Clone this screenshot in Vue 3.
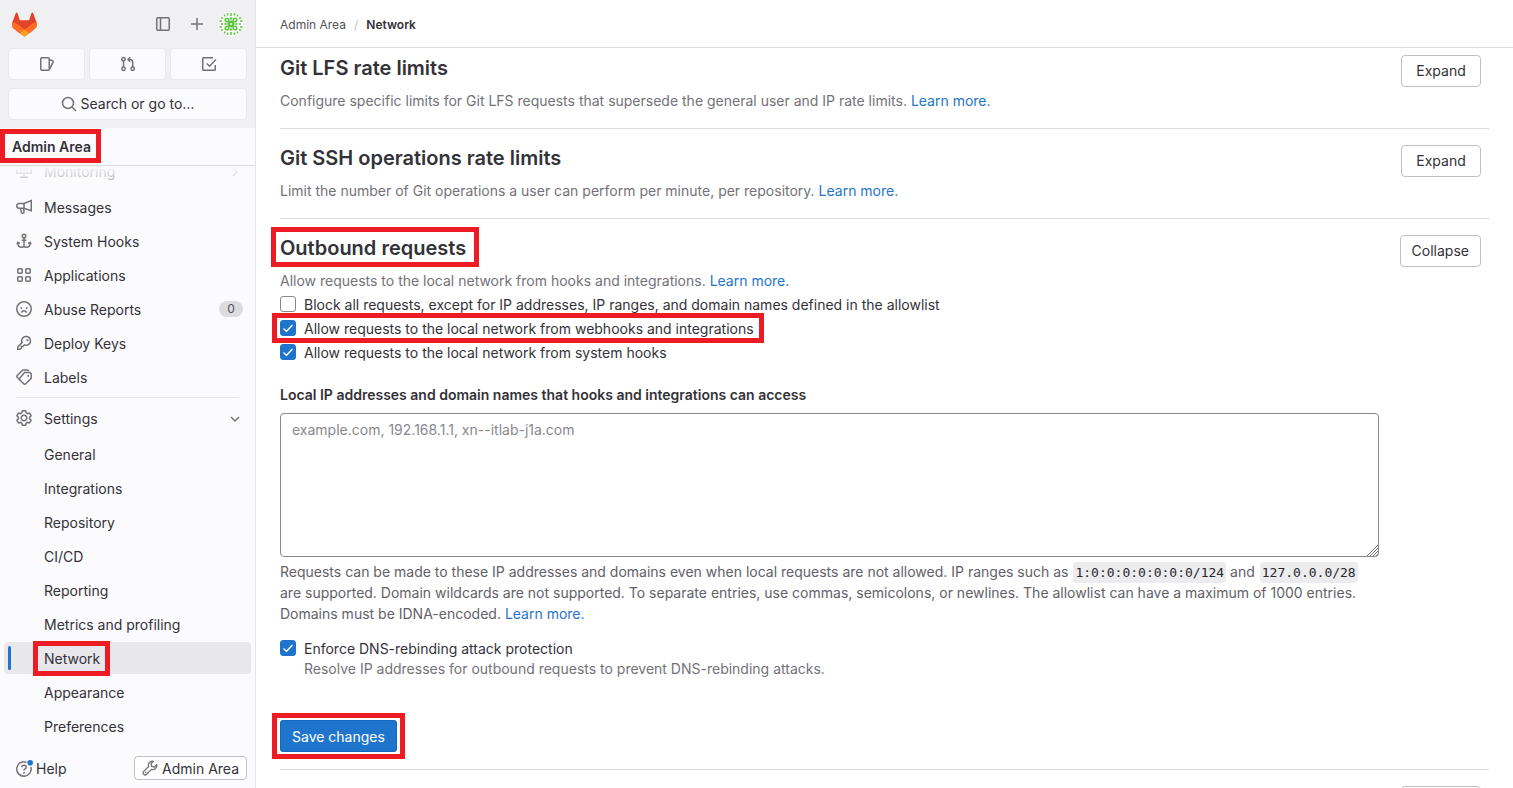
<script setup>
import { ref } from 'vue'

const blockAll = ref(false)
const allowWebhooks = ref(true)
const allowSystem = ref(true)
const enforceDns = ref(true)
const allowlist = ref('')

const icons = {
  monitoring: ['M.75 1.75h14.500v8.500H.75z', 'M8 10.5v3.5M4 14.25h8M5 5v2.500M8 4v3.500M11 3v4.500'],
  messages: ['M15.25 1.5v10.2L8 9.2H3A2.25 2.25 0 0 1 .75 7v-.2A2.25 2.25 0 0 1 3 4.5h5z', 'M8 4.5v4.7M4.3 9.4l1.2 4.1a1.3 1.3 0 0 0 2.5-.6L7.6 9.4'],
  hooks: ['M8 5v9.2M1.75 10c.2 2.6 1.6 4.25 3.8 4.25 1.4 0 2.1-.5 2.45-1.2.35.7 1.05 1.2 2.45 1.2 2.2 0 3.6-1.65 3.8-4.25M.9 11.2l1-1.9 1.9 1.2M15.1 11.2l-1-1.9-1.9 1.2M5.7 7.2h4.6', 'M9.8 3a1.8 1.8 0 1 1-3.6 0 1.8 1.8 0 0 1 3.6 0z'],
  applications: ['M2.75 1.75h2.5a1 1 0 0 1 1 1v2.5a1 1 0 0 1-1 1h-2.5a1 1 0 0 1-1-1v-2.5a1 1 0 0 1 1-1z', 'M10.75 1.75h2.5a1 1 0 0 1 1 1v2.5a1 1 0 0 1-1 1h-2.5a1 1 0 0 1-1-1v-2.5a1 1 0 0 1 1-1z', 'M2.75 9.75h2.5a1 1 0 0 1 1 1v2.5a1 1 0 0 1-1 1h-2.5a1 1 0 0 1-1-1v-2.5a1 1 0 0 1 1-1z', 'M10.75 9.75h2.5a1 1 0 0 1 1 1v2.5a1 1 0 0 1-1 1h-2.5a1 1 0 0 1-1-1v-2.5a1 1 0 0 1 1-1z'],
  abuse: ['M15.25 8A7.25 7.25 0 1 1 .75 8a7.25 7.25 0 0 1 14.5 0z', 'M5.8 11.7c0-1.2 1-1.9 2.2-1.9s2.2.7 2.2 1.9M5 6.2v1.3M11 6.2v1.3M6 7.4H5M10 7.4h1'],
  key: ['M6.1 7.6A4.4 4.4 0 1 1 8.5 9.9L6.8 11.6H5.3v1.6l-1.1 1.1H1.7v-2.3z', 'M10.4 5.1h1.2v1.2'],
  labels: ['M8.6 3.5h4.9a1.6 1.6 0 0 1 1.7 1.7v4.2L9.7 14.8a1.4 1.4 0 0 1-2 0L3.9 11a1.4 1.4 0 0 1 0-2z', 'M4.7 11.7 1.2 8.3a1.3 1.3 0 0 1 0-1.8L6.8 .9h4.4a1.4 1.4 0 0 1 1.4 1.4M11.4 6.8h.9v.9'],
  settings: ['M6.4.8h3.2l.6 2 1.300.8 2.100-.5 1.500 2.700-1.500 1.500v1.400l1.500 1.500-1.500 2.700-2.100-.5-1.300.8-.6 2H6.400l-.6-2-1.300-.8-2.100.5-1.500-2.700 1.500-1.500V7.300L.9 5.800l1.500-2.700 2.100.5 1.300-.8z', 'M10.8 8a2.8 2.8 0 1 1-5.6 0 2.8 2.8 0 0 1 5.6 0z'],
}

const entries = [
  { label: 'Monitoring', icon: 'monitoring', arrow: true, group: true },
  { label: 'Messages', icon: 'messages' },
  { label: 'System Hooks', icon: 'hooks' },
  { label: 'Applications', icon: 'applications' },
  { label: 'Abuse Reports', icon: 'abuse', count: 0 },
  { label: 'Deploy Keys', icon: 'key' },
  { label: 'Labels', icon: 'labels' },
]

const settings = [
  'General', 'Integrations', 'Repository', 'CI/CD', 'Reporting',
  'Metrics and profiling', 'Network', 'Appearance', 'Preferences',
]
</script>

<template>
  <div class="app">
    <aside class="sidebar">
      <div class="top">
        <div class="brand-row">
          <a href="#" class="brand" aria-label="Homepage">
            <svg width="25" height="25" viewBox="0 0 25 24">
              <path fill="#e24329" d="m24.507 9.500-.034-.090L21.082.562a.896.896 0 0 0-1.694.091l-2.290 7.010H7.825L5.535.653a.898.898 0 0 0-1.694-.090L.451 9.411.416 9.500a6.297 6.297 0 0 0 2.090 7.278l.012.010.030.022 5.160 3.867 2.560 1.935 1.554 1.176a1.051 1.051 0 0 0 1.268 0l1.555-1.176 2.560-1.935 5.197-3.890.014-.010A6.297 6.297 0 0 0 24.507 9.500Z" />
              <path fill="#fc6d26" d="m24.507 9.500-.034-.090a11.440 11.440 0 0 0-4.560 2.051l-7.447 5.632 4.742 3.584 5.197-3.890.014-.010A6.297 6.297 0 0 0 24.507 9.500Z" />
              <path fill="#fca326" d="m7.707 20.677 2.560 1.935 1.555 1.176a1.051 1.051 0 0 0 1.268 0l1.555-1.176 2.560-1.935-4.743-3.584-4.755 3.584Z" />
              <path fill="#fc6d26" d="M5.010 11.461a11.430 11.430 0 0 0-4.560-2.050L.416 9.500a6.297 6.297 0 0 0 2.090 7.278l.012.010.030.022 5.160 3.867 4.745-3.584-7.444-5.632Z" />
            </svg>
          </a>
          <div class="tools">
            <button type="button" class="bare" aria-label="Toggle sidebar">
              <svg class="ico" viewBox="0 0 16 16"><rect x="1.750" y="1.750" width="12.500" height="12.500" rx="1.200" /><path d="M5.500 2v12" /></svg>
            </button>
            <button type="button" class="bare" aria-label="Create new">
              <svg class="ico" viewBox="0 0 16 16"><path d="M8 2v12M2 8h12" /></svg>
            </button>
            <button type="button" class="bare avatar" aria-label="User menu">
              <svg width="24" height="24" viewBox="0 0 24 24">
                <path class="knots" d="M12 8.500v7M8.500 12h7M8.500 8.500l7 7M15.500 8.500l-7 7" />
                <g class="rings">
                  <circle cx="8" cy="8" r="1.800" /><circle cx="16" cy="8" r="1.800" />
                  <circle cx="8" cy="16" r="1.800" /><circle cx="16" cy="16" r="1.800" />
                  <circle cx="12" cy="12" r="1.800" />
                </g>
                <path class="knots" d="M11 6.500h2M11 17.500h2M6.500 11v2M17.500 11v2" />
                <path class="rays" d="M12 1v3M8.500 1v2.500M15.500 1v2.500M5 2.500l1 2M19 2.500l-1 2M12 20v3M8.500 20.500V23M15.500 20.500V23M5 21.500l1-2M19 21.500l-1-2M0 9h3M0 15h3M2 12h2M21 9h3M21 15h3M20 12h2M2 5.500l2 1M22 5.500l-2 1M2 18.500l2-1M22 18.500l-2-1" />
              </svg>
            </button>
          </div>
        </div>
        <div class="counters">
          <button type="button" aria-label="Issues">
            <svg class="ico" viewBox="0 0 16 16"><rect x="1.750" y="1.750" width="8.500" height="12.500" rx="1.200" /><path d="m10.500 3.500 3 1.300a1 1 0 0 1 .6 1.300l-3.600 7.200" /></svg>
          </button>
          <button type="button" aria-label="Merge requests">
            <svg class="ico" viewBox="0 0 16 16"><circle cx="3.500" cy="3.300" r="1.700" /><circle cx="3.500" cy="12.700" r="1.700" /><circle cx="12.700" cy="12.700" r="1.700" /><path d="M3.500 5v6M12.700 11V6.500c0-1.800-.9-3-2.700-3H8.200M10.200 1.300 8 3.500l2.200 2.200" /></svg>
          </button>
          <button type="button" aria-label="To-Do List">
            <svg class="ico" viewBox="0 0 16 16"><path d="M12 1.750H2.500a.75.75 0 0 0-.75.75v11c0 .4.300.75.750.750h11c.4 0 .75-.3.75-.75V9M5.800 7.500l2.700 2.700 6.400-6.600" /></svg>
          </button>
        </div>
        <button type="button" class="search">
          <svg class="ico" viewBox="0 0 16 16"><circle cx="7" cy="7" r="5.500" /><path d="m11 11 4 4" /></svg>
          Search or go to…
        </button>
      </div>

      <div class="context"><span class="marked mark-context">Admin Area</span></div>

      <nav class="nav" aria-label="Admin Area">
        <ul>
          <li v-for="e in entries" :key="e.label" :class="{ group: e.group }">
            <a href="#" class="item">
              <svg class="ico" viewBox="0 0 16 16"><path v-for="d in icons[e.icon]" :key="d" :d="d" /></svg>
              <span class="grow">{{ e.label }}</span>
              <span v-if="e.count !== undefined" class="badge">{{ e.count }}</span>
              <svg v-if="e.arrow" class="chev" viewBox="0 0 12 12"><path d="m4 2 4 4-4 4" /></svg>
            </a>
          </li>
        </ul>
        <hr>
        <button type="button" class="item" aria-expanded="true">
          <svg class="ico" viewBox="0 0 16 16"><path v-for="d in icons.settings" :key="d" :d="d" /></svg>
          <span class="grow">Settings</span>
          <svg class="chev" viewBox="0 0 12 12"><path d="m2 4 4 4 4-4" /></svg>
        </button>
        <ul class="sub">
          <li v-for="s in settings" :key="s">
            <a href="#" class="item" :class="{ active: s === 'Network' }">
              <span :class="{ 'marked mark-nav': s === 'Network' }">{{ s }}</span>
            </a>
          </li>
        </ul>
      </nav>

      <div class="foot">
        <button type="button" class="help">
          <svg class="ico" viewBox="0 0 16 16"><path d="M10.500 1.200A7.250 7.250 0 1 0 14.900 6" /><path d="M5.800 6.300C5.800 5 6.800 4.200 8 4.200s2.200.8 2.200 2c0 1.600-2.200 1.700-2.200 3.300M8 10.900v1.500" /><circle class="dot" cx="14.200" cy="1.800" r="2.800" /></svg>
          Help
        </button>
        <a href="#" class="admin">
          <svg class="ico thin" viewBox="0 0 16 16"><path d="M11.300 1.300a4 4 0 0 0-4.700 5.200L1.700 11.400a2 2 0 0 0 2.900 2.900l4.900-4.900a4 4 0 0 0 5.200-4.700L12.300 7 9.600 6.400 9 3.700z" /><path d="m3.200 12.800 1-1" /></svg>
          Admin Area
        </a>
      </div>
    </aside>

    <div class="page">
      <header class="crumbs">
        <a href="#">Admin Area</a><span class="slash">/</span><strong>Network</strong>
      </header>
      <main>
        <section>
          <div class="head">
            <h2>Git LFS rate limits</h2>
            <button type="button" class="btn">Expand</button>
          </div>
          <p class="desc">Configure specific limits for Git LFS requests that supersede the general user and IP rate limits. <a href="#">Learn more.</a></p>
        </section>
        <section>
          <div class="head">
            <h2>Git SSH operations rate limits</h2>
            <button type="button" class="btn">Expand</button>
          </div>
          <p class="desc">Limit the number of Git operations a user can perform per minute, per repository. <a href="#">Learn more.</a></p>
        </section>
        <section>
          <div class="head">
            <h2><span class="marked mark-title">Outbound requests</span></h2>
            <button type="button" class="btn">Collapse</button>
          </div>
          <p class="desc">Allow requests to the local network from hooks and integrations. <a href="#">Learn more.</a></p>
          <form @submit.prevent>
            <div class="check">
              <label><input v-model="blockAll" type="checkbox">Block all requests, except for IP addresses, IP ranges, and domain names defined in the allowlist</label>
            </div>
            <div class="check">
              <label class="marked mark-check"><input v-model="allowWebhooks" type="checkbox">Allow requests to the local network from webhooks and integrations</label>
            </div>
            <div class="check">
              <label><input v-model="allowSystem" type="checkbox">Allow requests to the local network from system hooks</label>
            </div>
            <label class="field" for="allowlist">Local IP addresses and domain names that hooks and integrations can access</label>
            <textarea id="allowlist" v-model="allowlist" placeholder="example.com, 192.168.1.1, xn--itlab-j1a.com"></textarea>
            <p class="hint">Requests can be made to these IP addresses and domains even when local requests are not allowed. IP ranges such as <code>1:0:0:0:0:0:0:0/124</code> and <code>127.0.0.0/28</code> are supported. Domain wildcards are not supported. To separate entries, use commas, semicolons, or newlines. The allowlist can have a maximum of 1000 entries. Domains must be IDNA-encoded. <a href="#">Learn more.</a></p>
            <div class="check">
              <label><input v-model="enforceDns" type="checkbox" aria-describedby="dns-help">Enforce DNS-rebinding attack protection</label>
            </div>
            <p id="dns-help" class="check-help">Resolve IP addresses for outbound requests to prevent DNS-rebinding attacks.</p>
            <button type="submit" class="save marked mark-save">Save changes</button>
          </form>
        </section>
        <section>
          <div class="head">
            <h2></h2>
            <button type="button" class="btn" aria-label="Expand"></button>
          </div>
        </section>
      </main>
    </div>
  </div>
</template>

<style>
body {
  margin: 0;
  overflow: hidden;
}
</style>

<style scoped>
.app {
  display: flex;
  height: 100vh;
  overflow: hidden;
  background: #fff;
  color: #333238;
  font: 14px/20px Inter, "Noto Sans", sans-serif;
}
.app *, .app *::after { box-sizing: border-box; }
button, textarea { font: inherit; color: inherit; }
button { cursor: pointer; }
a { color: #1f75cb; text-decoration: none; }
ul { list-style: none; margin: 0; padding: 0; }
p, h2 { margin: 0; }

.ico {
  width: 16px;
  height: 16px;
  flex: none;
  fill: none;
  stroke: #737278;
  stroke-width: 1.5;
  overflow: visible;
}
.ico.thin { stroke-width: 1.3; }
.chev {
  width: 12px;
  height: 12px;
  flex: none;
  fill: none;
  stroke: #737278;
  stroke-width: 1.5;
}

/* red callout frames */
.marked { position: relative; }
.marked::after {
  content: "";
  position: absolute;
  border: 5px solid #ed1c24;
  pointer-events: none;
}
.mark-context::after { inset: -9px -10px -8px -12px; }
.mark-nav::after { inset: -8px -10px -7px -11px; }
.mark-title::after { inset: -9px -13px -7px -9px; }
.mark-check::after { inset: -6px -10px 0 -8px; }
.mark-save::after { inset: -7px -8px -7px -8px; }

.sidebar {
  display: flex;
  flex-direction: column;
  flex: none;
  width: 256px;
  background: #fbfafd;
  border-right: 1px solid #e6e6ea;
}
.top {
  display: flex;
  flex-direction: column;
  gap: 8px;
  padding: 8px;
  background: #f0f0f3;
}
.brand-row {
  display: flex;
  align-items: center;
  justify-content: space-between;
  height: 32px;
  padding: 0 4px;
}
.brand { display: flex; }
.tools { display: flex; align-items: center; gap: 18px; }
.bare {
  display: flex;
  padding: 0;
  border: 0;
  background: none;
}
.avatar {
  margin-left: -4px;
  border-radius: 50%;
  overflow: hidden;
  background: #fff;
}
.rays { stroke: #5cc53f; stroke-width: 1.5; }
.knots { fill: none; stroke: #5cc53f; stroke-width: 2; }
.rings { fill: #fff; stroke: #5cc53f; stroke-width: 1.6; }
.counters { display: flex; gap: 4px; }
.counters button {
  display: flex;
  flex: 1;
  align-items: center;
  justify-content: center;
  height: 32px;
  padding: 0;
}
.counters button, .search {
  border: 1px solid #e9e9ed;
  border-radius: 4px;
  background: #fbfafd;
}
.search {
  display: flex;
  align-items: center;
  justify-content: center;
  gap: 4px;
  height: 32px;
  padding: 0;
}
.context {
  height: 38px;
  padding: 9px 12px;
  border-bottom: 1px solid #dcdcde;
  font-weight: 600;
}
.nav {
  position: relative;
  flex: 1;
  min-height: 0;
  overflow: hidden;
  padding: 0 4px;
}
.nav > ul:first-child { margin-top: -11px; }
.nav::after {
  content: "";
  position: absolute;
  inset: 0 0 auto;
  height: 32px;
  background: linear-gradient(#fbfafd, #fbfafd00);
  pointer-events: none;
}
.group .item { margin-bottom: 4px; opacity: 0.8; }
.item {
  position: relative;
  display: flex;
  align-items: center;
  gap: 12px;
  width: 100%;
  height: 32px;
  margin-bottom: 2px;
  padding: 2px 10px 0 12px;
  border: 0;
  border-radius: 4px;
  background: none;
  color: #333238;
  text-align: left;
}
.item .ico { margin-top: -2px; }
.grow { flex: 1; }
.badge {
  width: 24px;
  margin: -3px -2px 0 0;
  border-radius: 8px;
  background: #dcdcde;
  color: #535158;
  font-size: 12px;
  line-height: 16px;
  text-align: center;
}
.nav hr {
  margin: 4px 12px;
  border: 0;
  border-top: 1px solid #e6e6ea;
}
.nav > .item { margin-bottom: 4px; }
.sub .item { padding-left: 40px; }
.active { background: #e8e7ec; }
.active::before {
  content: "";
  position: absolute;
  left: 4px;
  top: 4px;
  bottom: 4px;
  width: 3px;
  border-radius: 2px;
  background: #1f75cb;
}
.foot {
  display: flex;
  align-items: center;
  justify-content: space-between;
  padding: 8px 8px 8px 16px;
}
.help {
  display: flex;
  align-items: center;
  gap: 4px;
  padding: 1px 0 0;
  border: 0;
  background: none;
}
.help .dot { fill: #1f75cb; stroke: none; }
.admin {
  display: flex;
  align-items: center;
  gap: 4px;
  height: 24px;
  padding: 1px 7px 0;
  border: 1px solid #bfbfc3;
  border-radius: 4px;
  background: #fff;
  color: #333238;
}
.admin .ico { margin-top: -2px; }

.page {
  flex: 1;
  min-width: 0;
  overflow: hidden;
}
.crumbs {
  position: relative;
  z-index: 1;
  display: flex;
  align-items: center;
  height: 48px;
  padding: 3px 24px 0;
  border-bottom: 1px solid #dcdcde;
  background: #fff;
  font-size: 12px;
}
.crumbs a { color: #535158; }
.crumbs strong { font-weight: 600; }
.slash { margin: 0 8px; color: #bfbfc3; }

main { margin-top: -9px; padding: 0 24px; }
section {
  padding: 16px 0 17px;
  border-bottom: 1px solid #dcdcde;
}
.head {
  display: flex;
  align-items: flex-start;
  justify-content: space-between;
  height: 36px;
  padding-right: 8px;
}
h2 {
  font-size: 20px;
  line-height: 26px;
  font-weight: 600;
}
.btn {
  min-width: 80px;
  height: 32px;
  padding: 0 11px;
  border: 1px solid #bfbfc3;
  border-radius: 4px;
  background: #fff;
}
.desc { color: #737278; }
form { padding: 4px 110px 0 0; }
.check { display: flex; height: 24px; }
.check label { display: flex; gap: 8px; }
.check input {
  appearance: none;
  flex: none;
  width: 16px;
  height: 16px;
  margin: 1px 0 0;
  border: 1px solid #89888d;
  border-radius: 3px;
  background: #fff;
}
.check input:checked {
  border-color: #1f75cb;
  background: #1f75cb url("data:image/svg+xml,%3Csvg xmlns='http://www.w3.org/2000/svg' viewBox='0 0 14 14'%3E%3Cpath d='M2.500 7.500 5.500 10.300 11.500 4' fill='none' stroke='white' stroke-width='1.400'/%3E%3C/svg%3E") center / 14px no-repeat;
}
.field {
  display: block;
  margin: 18px 0 8px;
  font-weight: 600;
}
textarea {
  display: block;
  width: 100%;
  height: 144px;
  padding: 6px 11px;
  border: 1px solid #89888d;
  border-radius: 4px;
  background: #fff;
  outline: 0;
  resize: vertical;
}
textarea::placeholder { color: #89888d; }
textarea::-webkit-resizer {
  background: url("data:image/svg+xml,%3Csvg xmlns='http://www.w3.org/2000/svg' viewBox='0 0 15 15'%3E%3Cpath d='M4 15 15 4M7 15 15 7M10 15 15 10M13 15 15 13' fill='none' stroke='%23737278'/%3E%3C/svg%3E") right bottom / 15px no-repeat;
}
.hint {
  margin: 4px 0 15px;
  color: #626168;
  line-height: 21px;
}
code {
  margin-left: 1px;
  padding: 3px 2px;
  border-radius: 4px;
  background: #ececef;
  color: #28272d;
  font: 13px/15px "DejaVu Sans Mono", monospace;
}
.check-help {
  margin: -4px 0 41px 24px;
  color: #737278;
}
.save {
  display: block;
  height: 32px;
  padding: 2px 12px 0;
  border: 0;
  border-radius: 4px;
  background: #1f75cb;
  box-shadow: inset 0 0 0 1px #1068bf;
  color: #fff;
}
</style>
